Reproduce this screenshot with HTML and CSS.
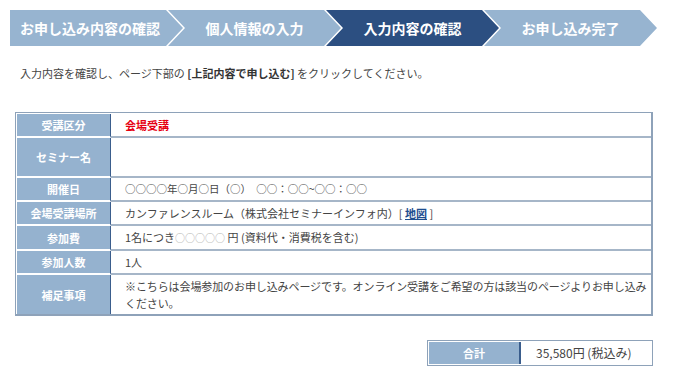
FILE: index.html
```html
<!DOCTYPE html>
<html lang="ja">
<head>
<meta charset="utf-8">
<title>入力内容の確認</title>
<link rel="stylesheet" href="styles.css">
</head>
<body>
<div class="page">
  <nav class="steps">
    <div class="step step-first">お申し込み内容の確認</div>
    <div class="step">個人情報の入力</div>
    <div class="step step-current">入力内容の確認</div>
    <div class="step">お申し込み完了</div>
  </nav>

  <p class="intro">入力内容を確認し、ページ下部の <strong>[上記内容で申し込む]</strong> をクリックしてください。</p>

  <table class="info">
    <tr>
      <th>受講区分</th>
      <td><span class="red">会場受講</span></td>
    </tr>
    <tr class="tall">
      <th>セミナー名</th>
      <td></td>
    </tr>
    <tr>
      <th>開催日</th>
      <td class="small">○○○○年○月○日（○）　○○：○○~○○：○○</td>
    </tr>
    <tr>
      <th>会場受講場所</th>
      <td>カンファレンスルーム（株式会社セミナーインフォ内）[ <a class="map" href="#">地図</a> ]</td>
    </tr>
    <tr>
      <th>参加費</th>
      <td>1名につき<span class="ph">○○○○○</span> 円 (資料代・消費税を含む)</td>
    </tr>
    <tr>
      <th>参加人数</th>
      <td>1人</td>
    </tr>
    <tr class="last">
      <th>補足事項</th>
      <td>※こちらは会場参加のお申し込みページです。オンライン受講をご希望の方は該当のページよりお申し込みください。</td>
    </tr>
  </table>

  <div class="total-row">
    <div class="total">
      <div class="total-label">合計</div>
      <div class="total-value">35,580円 (税込み)</div>
    </div>
  </div>
</div>
</body>
</html>
```

FILE: styles.css
```css
* { box-sizing: border-box; }

html, body {
  margin: 0;
  padding: 0;
  background: #fff;
}

body {
  font-family: "Noto Sans CJK JP", "Noto Sans", sans-serif;
  color: #444;
  font-size: 11px;
}

.page {
  width: 700px;
  padding: 10px 0 0 0;
}

/* Step bar */
.steps {
  display: flex;
  height: 36px;
  padding-left: 10px;
}

.step {
  width: 173px;
  height: 36px;
  margin-left: -15px;
  background: #97b4d0;
  color: #fff;
  font-weight: bold;
  font-size: 14px;
  line-height: 36px;
  text-align: center;
  padding: 0 17px;
  clip-path: polygon(0 0, calc(100% - 17px) 0, 100% 50%, calc(100% - 17px) 100%, 0 100%, 17px 50%);
}

.step-first {
  margin-left: 0;
  padding: 0 17px 0 4px;
  clip-path: polygon(0 0, calc(100% - 17px) 0, 100% 50%, calc(100% - 17px) 100%, 0 100%);
}

.step-current {
  background: #2c4f81;
}

/* Intro */
.intro {
  margin: 18px 0 0 20px;
  line-height: 18px;
  font-size: 11px;
  color: #444;
}

.intro strong {
  color: #333;
}

/* Info table */
.info {
  margin: 30px 0 0 15px;
  width: 638px;
  border: 1px solid #8ea2b9;
  border-right-width: 2px;
  border-bottom-width: 2px;
  border-collapse: separate;
  border-spacing: 0;
  padding: 1px 0 0 1px;
}

.info th {
  width: 94px;
  background: #95b2cf;
  color: #fff;
  font-weight: bold;
  font-size: 11px;
  text-align: center;
  border-right: 1px solid #3a5d8c;
  border-bottom: 2px solid #fff;
  padding: 3px 0;
  line-height: 16px;
}

.info td {
  border-bottom: 2px solid #a6b6c8;
  padding: 3px 2px 3px 14px;
  line-height: 16px;
  font-size: 11px;
  color: #444;
}

.info tr.tall th,
.info tr.tall td {
  height: 40px;
}

.info tr.last th,
.info tr.last td {
  border-bottom: 0;
  line-height: 17px;
  padding-top: 3px;
  padding-bottom: 2px;
}

.info tr.last td {
  letter-spacing: -0.1px;
}

.info td.small {
  font-size: 10.5px;
}

.red {
  color: #e60012;
  font-weight: bold;
}

.map {
  color: #1d4d8f;
  font-weight: bold;
  text-decoration: underline;
}

.ph {
  color: #b0b0b0;
  font-size: 10px;
}

/* Total */
.total-row {
  display: flex;
  justify-content: flex-end;
  width: 653px;
  margin-top: 24px;
}

.total {
  display: flex;
  width: 226px;
  height: 26px;
  border: 1px solid #8ea2b9;
  padding: 1px;
}

.total-label {
  width: 92px;
  background: #95b2cf;
  color: #fff;
  font-weight: bold;
  text-align: center;
  line-height: 22px;
  border-right: 2px solid #3a5d8c;
}

.total-value {
  flex: 1;
  padding-left: 15px;
  line-height: 22px;
  font-size: 12px;
  color: #444;
}
```
